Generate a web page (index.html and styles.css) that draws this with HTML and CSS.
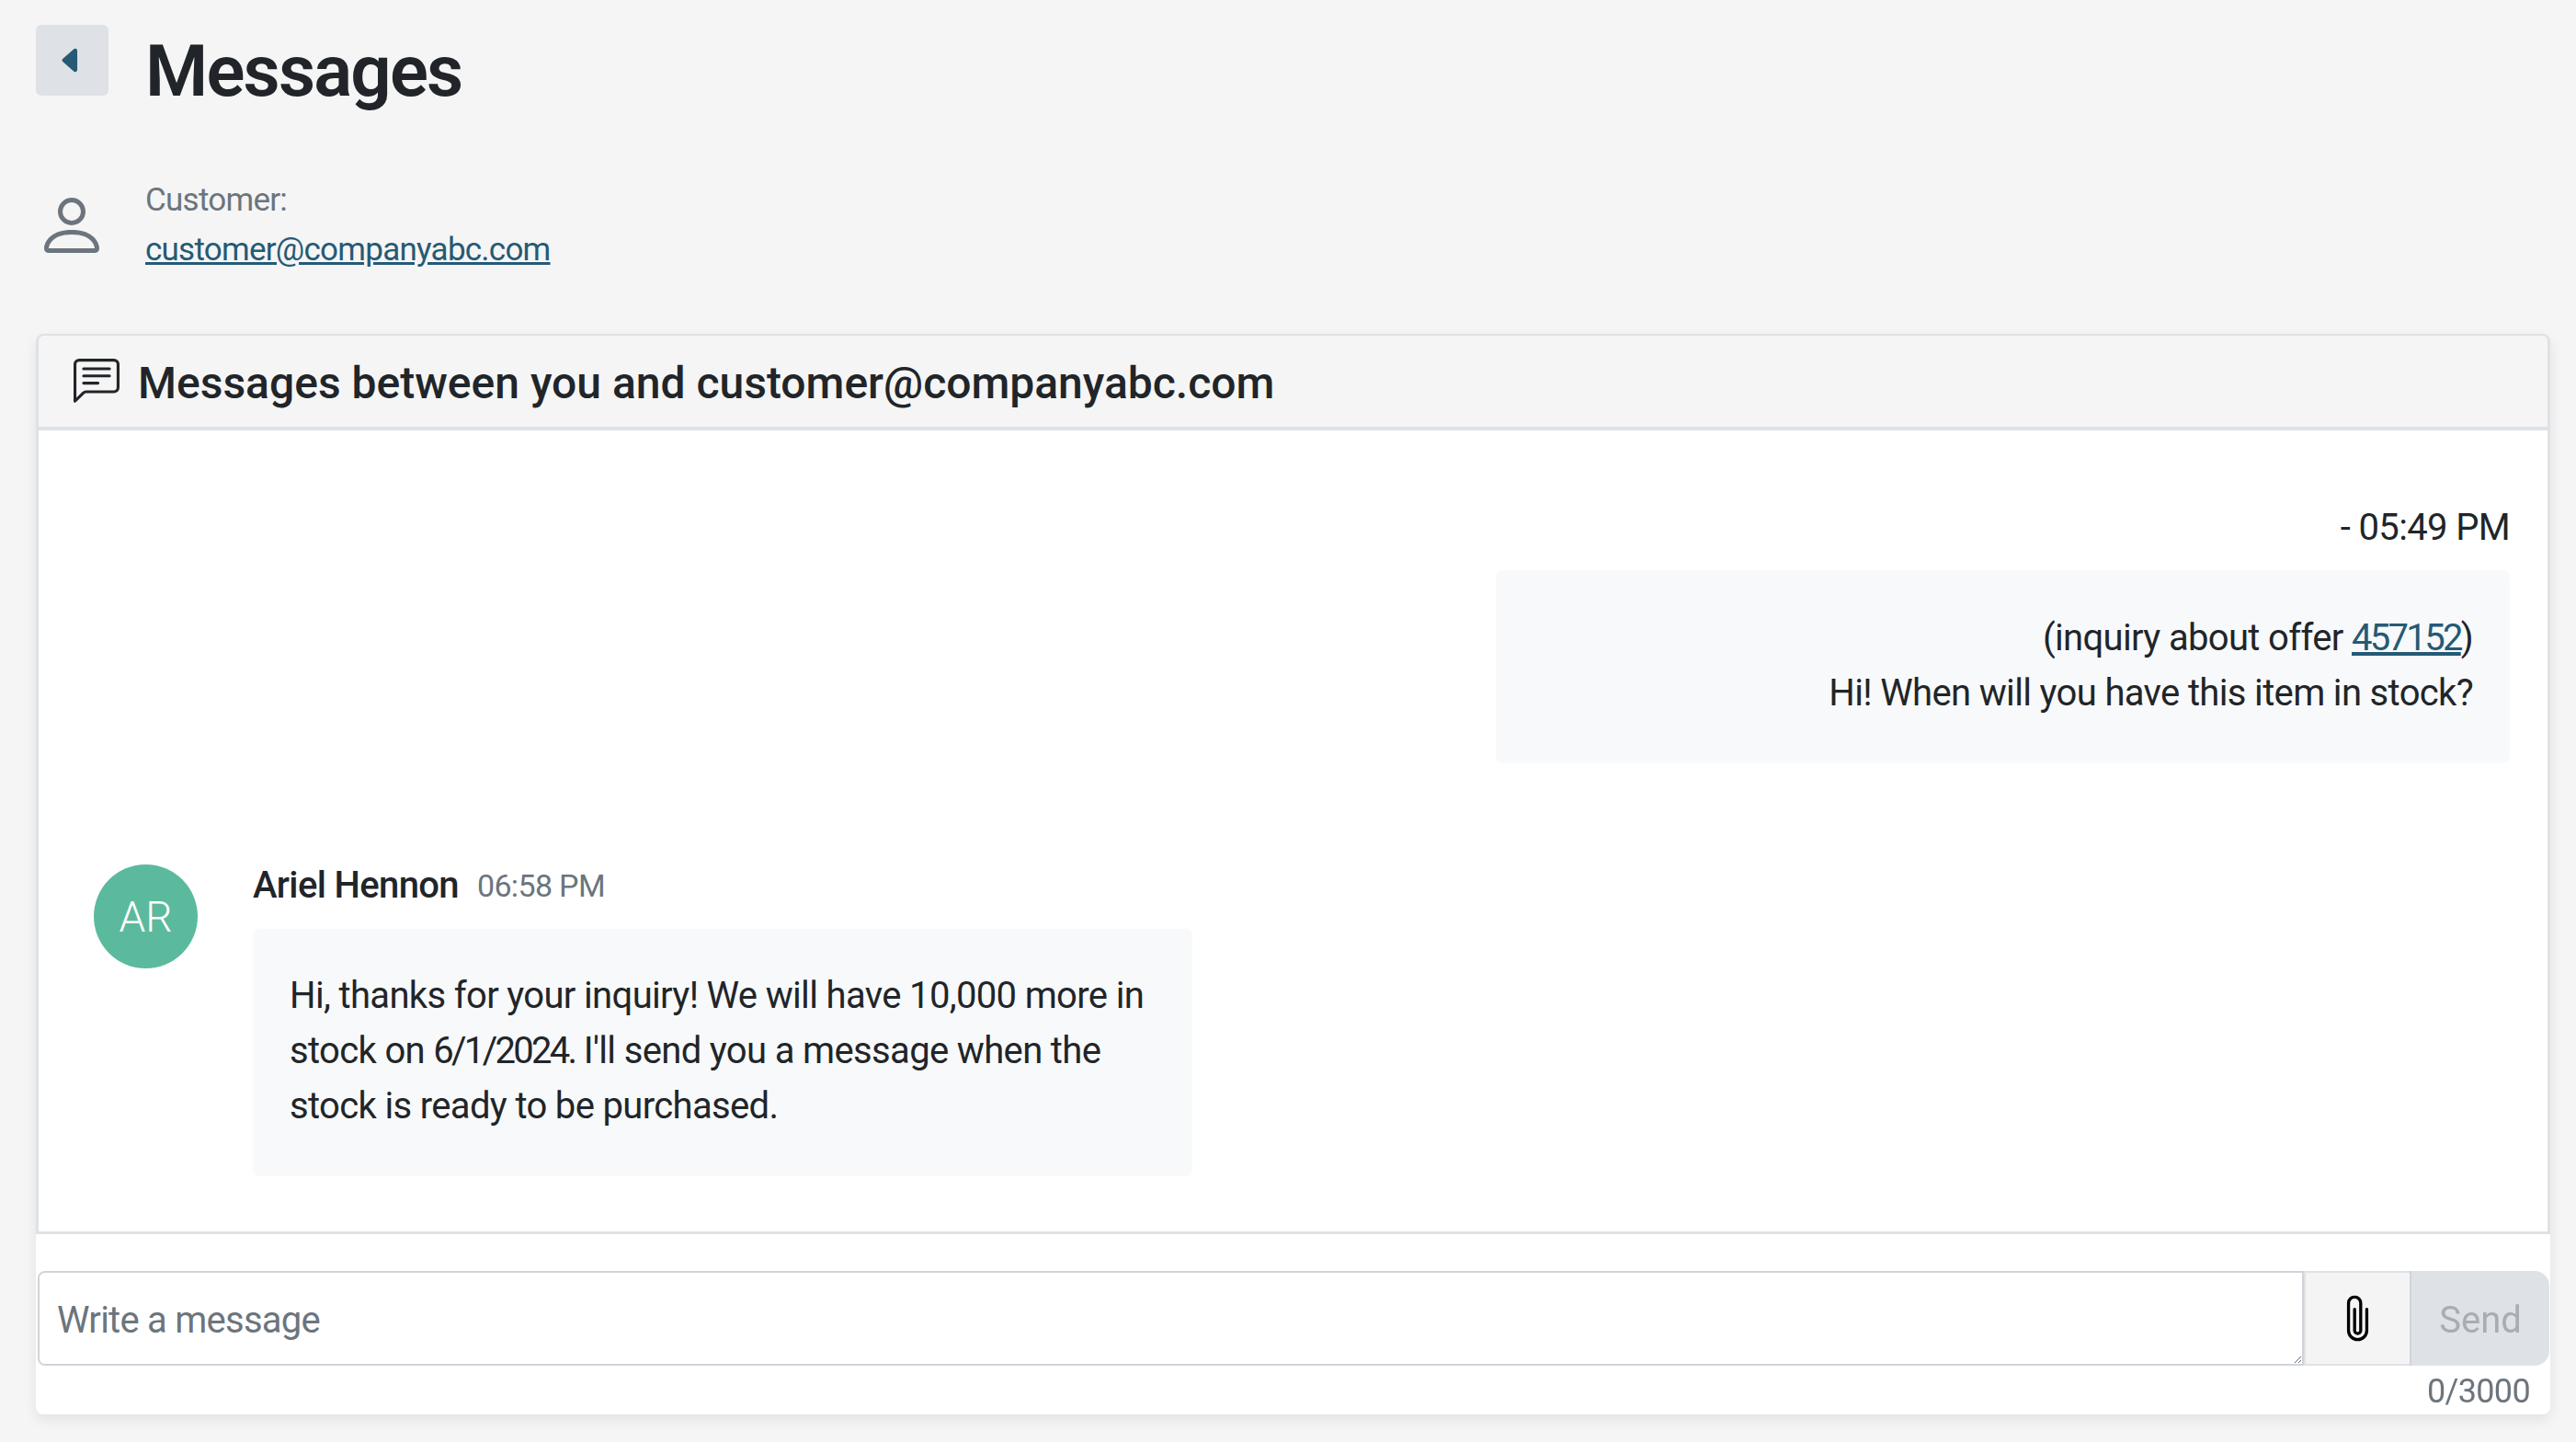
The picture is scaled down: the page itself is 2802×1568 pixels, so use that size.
FILE: index.html
```html
<!DOCTYPE html>
<html lang="en">

<head>
    <meta charset="UTF-8">
    <title>Messages</title>
    <link rel="stylesheet" href="styles.css">
</head>

<body>
    <div class="top">
        <button class="btn-back" type="button">
            <svg viewBox="0 0 16 16" width="35" height="35" fill="currentColor"><path d="m3.86 8.753 5.482 4.796c.646.566 1.658.106 1.658-.753V3.204a1 1 0 0 0-1.659-.753l-5.48 4.796a1 1 0 0 0 0 1.506z"/></svg>
        </button>
        <h1>Messages</h1>
    </div>

    <div class="customer">
        <svg class="customer-icon" viewBox="0 0 16 16" width="80" height="80" fill="currentColor"><path d="M8 8a3 3 0 1 0 0-6 3 3 0 0 0 0 6zm2-3a2 2 0 1 1-4 0 2 2 0 0 1 4 0zm4 8c0 1-1 1-1 1H3s-1 0-1-1 1-4 6-4 6 3 6 4zm-1-.004c-.001-.246-.154-.986-.832-1.664C11.516 10.68 10.289 10 8 10c-2.29 0-3.516.68-4.168 1.332-.678.678-.83 1.418-.832 1.664h10z"/></svg>
        <div>
            <div class="customer-label">Customer:</div>
            <a href="#">customer@companyabc.com</a>
        </div>
    </div>

    <section class="card">
        <header class="card-head">
            <svg viewBox="0 0 16 16" width="50" height="50" fill="currentColor">
                <path d="M14 1a1 1 0 0 1 1 1v8a1 1 0 0 1-1 1H4.414A2 2 0 0 0 3 11.586l-2 2V2a1 1 0 0 1 1-1h12zM2 0a2 2 0 0 0-2 2v12.793a.5.5 0 0 0 .854.353l2.853-2.853A1 1 0 0 1 4.414 12H14a2 2 0 0 0 2-2V2a2 2 0 0 0-2-2H2z"/>
                <path d="M3 3.5a.5.5 0 0 1 .5-.5h9a.5.5 0 0 1 0 1h-9a.5.5 0 0 1-.5-.5zM3 6a.5.5 0 0 1 .5-.5h9a.5.5 0 0 1 0 1h-9A.5.5 0 0 1 3 6zm0 2.5a.5.5 0 0 1 .5-.5h5a.5.5 0 0 1 0 1h-5a.5.5 0 0 1-.5-.5z"/>
            </svg>
            <h2>Messages between you and customer@companyabc.com</h2>
        </header>

        <div class="messages">
            <div class="msg-own">
                <div class="msg-own-time">- 05:49 PM</div>
                <div class="bubble bubble-own">
                    (inquiry about offer <a class="num" href="#">457152</a>)<br>
                    Hi! When will you have this item in stock?
                </div>
            </div>

            <div class="msg-other">
                <div class="avatar">AR</div>
                <div>
                    <div class="msg-meta">
                        <span class="msg-name">Ariel Hennon</span>
                        <span class="msg-time">06:58 PM</span>
                    </div>
                    <div class="bubble bubble-other">
                        Hi, thanks for your inquiry! We will have 10,000 more in<br>
                        stock on <span class="num">6/1/2024.</span> I'll send you a message when the<br>
                        stock is ready to be purchased.
                    </div>
                </div>
            </div>
        </div>

        <footer class="composer">
            <div class="input-group">
                <textarea placeholder="Write a message"></textarea>
                <button class="btn-attach" type="button">
                    <svg viewBox="0 0 16 16" width="53" height="53" fill="currentColor"><path d="M4.5 3a2.5 2.5 0 0 1 5 0v9a1.5 1.5 0 0 1-3 0V5a.5.5 0 0 1 1 0v7a.5.5 0 0 0 1 0V3a1.5 1.5 0 1 0-3 0v9a2.5 2.5 0 0 0 5 0V5a.5.5 0 0 1 1 0v7a3.5 3.5 0 1 1-7 0V3z"/></svg>
                </button>
                <button class="btn-send" type="button">Send</button>
            </div>
            <div class="counter">0/3000</div>
        </footer>
    </section>
</body>

</html>
```

FILE: styles.css
```css
html,
body {
    margin: 0;
    height: 100%;
}

body {
    box-sizing: border-box;
    padding: 27px 28px 0 39px;
    background: #f5f5f5;
    color: #212529;
    font-family: Roboto, "Liberation Sans", sans-serif;
    font-size: 40px;
    line-height: 60px;
    letter-spacing: -0.65px;
    overflow: hidden;
}

a {
    color: #255a75;
}

button {
    cursor: pointer;
    border: none;
    font-family: inherit;
}

/* 숫자는 좁게 */
.num {
    letter-spacing: -2.7px;
}

/* 상단 제목 */
.top {
    display: flex;
    align-items: flex-start;
    gap: 40px;
}

.btn-back {
    display: flex;
    align-items: center;
    justify-content: center;
    width: 79px;
    height: 77px;
    padding: 0 3px 0 0;
    border-radius: 6px;
    background: #dee2e6;
    color: #255a75;
}

.top h1 {
    margin: 8px 0 0;
    font-size: 78px;
    line-height: 86px;
    font-weight: 600;
    letter-spacing: -1.8px;
}

/* 고객 정보 */
.customer {
    display: flex;
    align-items: center;
    gap: 40px;
    margin-top: 70px;
    font-size: 35px;
    line-height: 54px;
    letter-spacing: -0.75px;
}

.customer-icon {
    color: #6c757d;
    margin-left: -1px;
}

.customer-label {
    color: #6c757d;
}

/* 메시지 카드 */
.card {
    margin-top: 64px;
    border-radius: 8px;
    background: #fff;
    box-shadow: 0 6px 14px rgba(0, 0, 0, 0.08);
}

.card-head {
    display: flex;
    align-items: center;
    gap: 20px;
    box-sizing: border-box;
    height: 105px;
    padding-left: 38px;
    border: 3px solid #dee2e6;
    border-top-width: 2px;
    border-bottom-width: 4px;
    border-radius: 8px 8px 0 0;
    background: #f5f5f5;
}

.card-head h2 {
    margin: 5px 0 0;
    font-size: 48px;
    line-height: 60px;
    font-weight: 500;
    letter-spacing: 0;
}

.messages {
    padding: 76px 41px 60px 60px;
    border: 3px solid #dee2e6;
    border-top: none;
}

.msg-own {
    display: flex;
    flex-direction: column;
    align-items: flex-end;
}

.msg-own-time {
    margin-bottom: 16px;
}

.bubble {
    box-sizing: border-box;
    border-radius: 8px;
    background: #f8f9fa;
}

.bubble-own {
    width: 1103px;
    padding: 44px 40px 46px;
    text-align: right;
}

.msg-other {
    display: flex;
    gap: 60px;
    margin-top: 110px;
}

.avatar {
    display: flex;
    align-items: center;
    justify-content: center;
    width: 113px;
    height: 113px;
    border-radius: 50%;
    background: #5bba9d;
    color: #fff;
    font-size: 46px;
    font-weight: 300;
    letter-spacing: 0;
}

.msg-meta {
    display: flex;
    align-items: center;
    gap: 20px;
    height: 45px;
    margin-bottom: 25px;
}

.msg-name {
    font-weight: 500;
}

.msg-time {
    color: #6c757d;
    font-size: 34px;
}

.bubble-other {
    width: 1022px;
    padding: 43px 40px 46px;
}

/* 입력창 */
.composer {
    padding: 40px 1px 0 2px;
}

.input-group {
    display: flex;
    height: 103px;
}

.input-group textarea {
    flex: 1;
    box-sizing: border-box;
    height: 103px;
    padding: 22px 19px 18px;
    border: 2px solid #ced4da;
    border-radius: 8px 0 0 8px;
    background: #fff;
    color: #212529;
    font-family: inherit;
    font-size: 40px;
    line-height: 60px;
    letter-spacing: -0.75px;
    outline: none;
}

.input-group textarea::placeholder {
    color: #6c757d;
}

.btn-attach {
    display: flex;
    align-items: center;
    justify-content: center;
    box-sizing: border-box;
    width: 115px;
    padding: 0;
    border: 2px solid #dee2e6;
    border-right: none;
    background: #f4f4f5;
    color: #000;
}

.btn-send {
    width: 152px;
    padding: 4px 0 0;
    border-left: 2px solid #ced4da;
    border-radius: 0 16px 16px 0;
    background: #dee2e6;
    color: #a8adb2;
    font-size: 40px;
}

.counter {
    padding: 4px 21px 0 0;
    color: #6c757d;
    font-size: 36px;
    line-height: 49px;
    text-align: right;
}
```
